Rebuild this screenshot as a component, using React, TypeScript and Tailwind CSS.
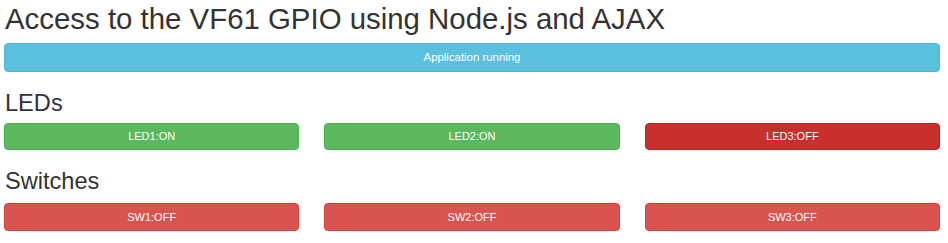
import React from "react";

const font = { fontFamily: '"Liberation Sans", Arial, sans-serif' };

function Btn({ label, cls, h }: { label: string; cls: string; h: string }) {
  return (
    <div
      className={`flex items-center justify-center rounded-[4px] border text-[11px] text-white ${cls} ${h}`}
    >
      {label}
    </div>
  );
}

export default function App() {
  return (
    <div className="w-[948px] h-[243px] bg-white overflow-hidden" style={font}>
      <div className="w-[936px] ml-[4px] flex flex-col">
        <h1 className="mt-[3px] ml-[1px] text-[29.4px] leading-[32px] text-[#333333]">
          Access to the VF61 GPIO using Node.js and AJAX
        </h1>
        <div className="mt-[8px] h-[29px] rounded-[4px] border border-[#46b8da] bg-[#5bc0de] flex items-center justify-center text-[11.4px] text-white">
          Application running
        </div>
        <h2 className="mt-[18px] ml-[1px] text-[23.6px] leading-[26px] text-[#333333]">LEDs</h2>
        <div className="mt-[7px] grid grid-cols-3 gap-x-[25px]">
          <Btn label="LED1:ON" cls="bg-[#5cb85c] border-[#4cae4c]" h="h-[27px]" />
          <Btn label="LED2:ON" cls="bg-[#5cb85c] border-[#4cae4c]" h="h-[27px]" />
          <Btn label="LED3:OFF" cls="bg-[#c9302c] border-[#ac2925]" h="h-[27px]" />
        </div>
        <h2 className="mt-[18px] ml-[1px] text-[23.6px] leading-[26px] text-[#333333]">Switches</h2>
        <div className="mt-[9px] grid grid-cols-3 gap-x-[25px]">
          <Btn label="SW1:OFF" cls="bg-[#d9534f] border-[#d43f3a]" h="h-[28px]" />
          <Btn label="SW2:OFF" cls="bg-[#d9534f] border-[#d43f3a]" h="h-[28px]" />
          <Btn label="SW3:OFF" cls="bg-[#d9534f] border-[#d43f3a]" h="h-[28px]" />
        </div>
      </div>
    </div>
  );
}
